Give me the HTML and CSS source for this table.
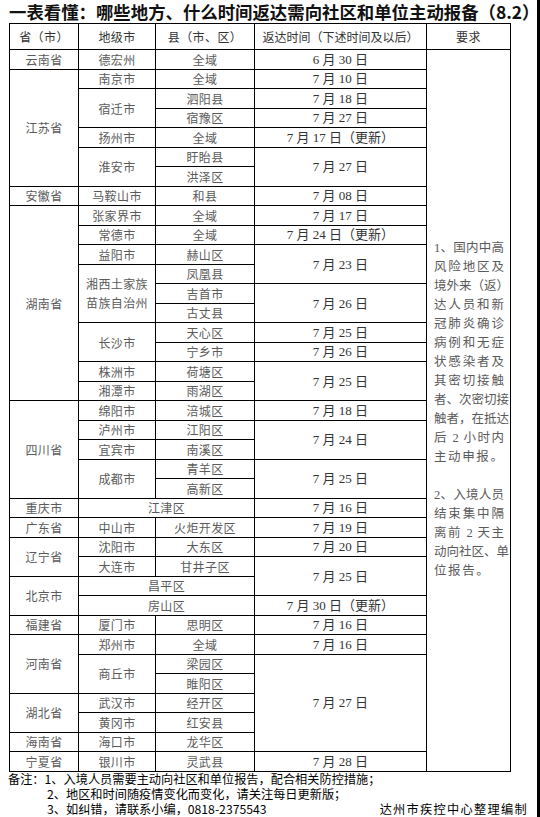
FILE: index.html
```html
<!DOCTYPE html>
<html lang="zh-CN">
<head>
<meta charset="utf-8">
<title>一表看懂</title>
<link rel="stylesheet" href="styles.css">
</head>
<body>
<div class="page">
  <h1 class="title">一表看懂：哪些地方、什么时间返达需向社区和单位主动报备（8.2）</h1>
  <table class="grid">
    <colgroup>
      <col class="c1"><col class="c2"><col class="c3"><col class="c4"><col class="c5">
    </colgroup>
    <thead>
      <tr class="head">
        <th>省（市）</th><th>地级市</th><th>县（市、区）</th><th class="t">返达时间（下述时间及以后）</th><th>要求</th>
      </tr>
    </thead>
    <tbody>
      <tr><td>云南省</td><td>德宏州</td><td>全域</td><td class="t">6 月 30 日</td>
        <td rowspan="37" class="req">
          <span class="ln">1、国内中高</span>
          <span class="ln">风险地区及</span>
          <span class="ln">境外来（返）</span>
          <span class="ln">达人员和新</span>
          <span class="ln">冠肺炎确诊</span>
          <span class="ln">病例和无症</span>
          <span class="ln">状感染者及</span>
          <span class="ln">其密切接触</span>
          <span class="ln">者、次密切接</span>
          <span class="ln">触者，在抵达</span>
          <span class="ln">后 2 小时内</span>
          <span class="ln last">主动申报。</span>
          <span class="ln gap">&nbsp;</span>
          <span class="ln">2、入境人员</span>
          <span class="ln">结束集中隔</span>
          <span class="ln">离前 2 天主</span>
          <span class="ln">动向社区、单</span>
          <span class="ln last">位报告。</span>
        </td>
      </tr>
      <tr><td rowspan="6">江苏省</td><td>南京市</td><td>全域</td><td class="t">7 月 10 日</td></tr>
      <tr><td rowspan="2">宿迁市</td><td>泗阳县</td><td class="t">7 月 18 日</td></tr>
      <tr><td>宿豫区</td><td class="t">7 月 27 日</td></tr>
      <tr><td>扬州市</td><td>全域</td><td class="t">7 月 17 日（更新）</td></tr>
      <tr><td rowspan="2">淮安市</td><td>盱眙县</td><td rowspan="2" class="t">7 月 27 日</td></tr>
      <tr><td>洪泽区</td></tr>
      <tr><td>安徽省</td><td>马鞍山市</td><td>和县</td><td class="t">7 月 08 日</td></tr>
      <tr><td rowspan="10">湖南省</td><td>张家界市</td><td>全域</td><td class="t">7 月 17 日</td></tr>
      <tr><td>常德市</td><td>全域</td><td class="t">7 月 24 日（更新）</td></tr>
      <tr><td>益阳市</td><td>赫山区</td><td rowspan="2" class="t">7 月 23 日</td></tr>
      <tr><td rowspan="3" class="wrap">湘西土家族<br>苗族自治州</td><td>凤凰县</td></tr>
      <tr><td>吉首市</td><td rowspan="2" class="t">7 月 26 日</td></tr>
      <tr><td>古丈县</td></tr>
      <tr><td rowspan="2">长沙市</td><td>天心区</td><td class="t">7 月 25 日</td></tr>
      <tr><td>宁乡市</td><td class="t">7 月 26 日</td></tr>
      <tr><td>株洲市</td><td>荷塘区</td><td rowspan="2" class="t">7 月 25 日</td></tr>
      <tr><td>湘潭市</td><td>雨湖区</td></tr>
      <tr><td rowspan="5">四川省</td><td>绵阳市</td><td>涪城区</td><td class="t">7 月 18 日</td></tr>
      <tr><td>泸州市</td><td>江阳区</td><td rowspan="2" class="t">7 月 24 日</td></tr>
      <tr><td>宜宾市</td><td>南溪区</td></tr>
      <tr><td rowspan="2">成都市</td><td>青羊区</td><td rowspan="2" class="t">7 月 25 日</td></tr>
      <tr><td>高新区</td></tr>
      <tr><td>重庆市</td><td colspan="2">江津区</td><td class="t">7 月 16 日</td></tr>
      <tr><td>广东省</td><td>中山市</td><td>火炬开发区</td><td class="t">7 月 19 日</td></tr>
      <tr><td rowspan="2">辽宁省</td><td>沈阳市</td><td>大东区</td><td class="t">7 月 20 日</td></tr>
      <tr><td>大连市</td><td>甘井子区</td><td rowspan="2" class="t">7 月 25 日</td></tr>
      <tr><td rowspan="2">北京市</td><td colspan="2">昌平区</td></tr>
      <tr><td colspan="2">房山区</td><td class="t">7 月 30 日（更新）</td></tr>
      <tr><td>福建省</td><td>厦门市</td><td>思明区</td><td class="t">7 月 16 日</td></tr>
      <tr><td rowspan="3">河南省</td><td>郑州市</td><td>全域</td><td class="t">7 月 16 日</td></tr>
      <tr><td rowspan="2">商丘市</td><td>梁园区</td><td rowspan="5" class="t">7 月 27 日</td></tr>
      <tr><td>睢阳区</td></tr>
      <tr><td rowspan="2">湖北省</td><td>武汉市</td><td>经开区</td></tr>
      <tr><td>黄冈市</td><td>红安县</td></tr>
      <tr><td>海南省</td><td>海口市</td><td>龙华区</td></tr>
      <tr><td>宁夏省</td><td>银川市</td><td>灵武县</td><td class="t">7 月 28 日</td></tr>
    </tbody>
  </table>
  <div class="notes">
    <div class="note-line"><span class="lead">备注：</span>1、入境人员需要主动向社区和单位报告，配合相关防控措施；</div>
    <div class="note-line indent">2、地区和时间随疫情变化而变化，请关注每日更新版；</div>
    <div class="note-line indent split"><span>3、如纠错，请联系小编，0818-2375543</span><span class="sign">达州市疾控中心整理编制</span></div>
  </div>
</div>
</body>
</html>
```
FILE: styles.css
```css
html, body {
  margin: 0;
  padding: 0;
  background: #fff;
}
.page {
  width: 537px;
  height: 817px;
  border-right: 3px solid #000;
  overflow: hidden;
  font-family: "Noto Sans CJK SC", "Noto Sans", sans-serif;
}
.title {
  margin: 0;
  padding-left: 9px;
  height: 23px;
  font-size: 17.4px;
  line-height: 23px;
  font-weight: 700;
  color: #111;
  white-space: nowrap;
  letter-spacing: 0;
}
.grid {
  margin-left: 9px;
  width: 501px;
  border-collapse: collapse;
  table-layout: fixed;
  border: 1px solid #000;
}
.c1 { width: 69px; }
.c2 { width: 77px; }
.c3 { width: 99px; }
.c4 { width: 172px; }
.c5 { width: 84px; }
.grid th, .grid td {
  border: 1px solid #000;
  padding: 0;
  text-align: center;
  vertical-align: middle;
  font-size: 12px;
  line-height: 17px;
  font-weight: 400;
  color: #5a5a5a;
  letter-spacing: 0.4px;
  white-space: nowrap;
  overflow: hidden;
}
.grid tr { height: 19.5px; }
.grid tr.head { height: 26px; }
.grid th { color: #333; }
.grid .t {
  font-family: "Liberation Serif", "Noto Sans CJK SC", serif;
  font-size: 13px;
  color: #333;
  letter-spacing: 0;
}
.grid th.t {
  font-family: "Noto Sans CJK SC", sans-serif;
  font-size: 12px;
}
.grid .wrap {
  line-height: 19px;
}
.grid td.req {
  vertical-align: middle;
  text-align: left;
  padding: 0 6px 0 7px;
  white-space: normal;
  font-family: "Liberation Serif", "Noto Sans CJK SC", serif;
  font-size: 12.5px;
  line-height: 19px;
  color: #5a5a5a;
  letter-spacing: 0;
}
.ln {
  display: block;
  text-align: justify;
  text-align-last: justify;
  white-space: nowrap;
}
.ln.last {
  text-align-last: left;
  letter-spacing: 1.6px;
}
.notes {
  margin-top: 0;
  font-size: 12.2px;
  line-height: 15px;
  color: #000;
}
.note-line {
  height: 15px;
  white-space: nowrap;
  padding-left: 8px;
}
.note-line.indent {
  padding-left: 47px;
}
.note-line.split {
  display: flex;
  justify-content: space-between;
  padding-right: 9px;
}
.sign {
  letter-spacing: 1.3px;
}
```
